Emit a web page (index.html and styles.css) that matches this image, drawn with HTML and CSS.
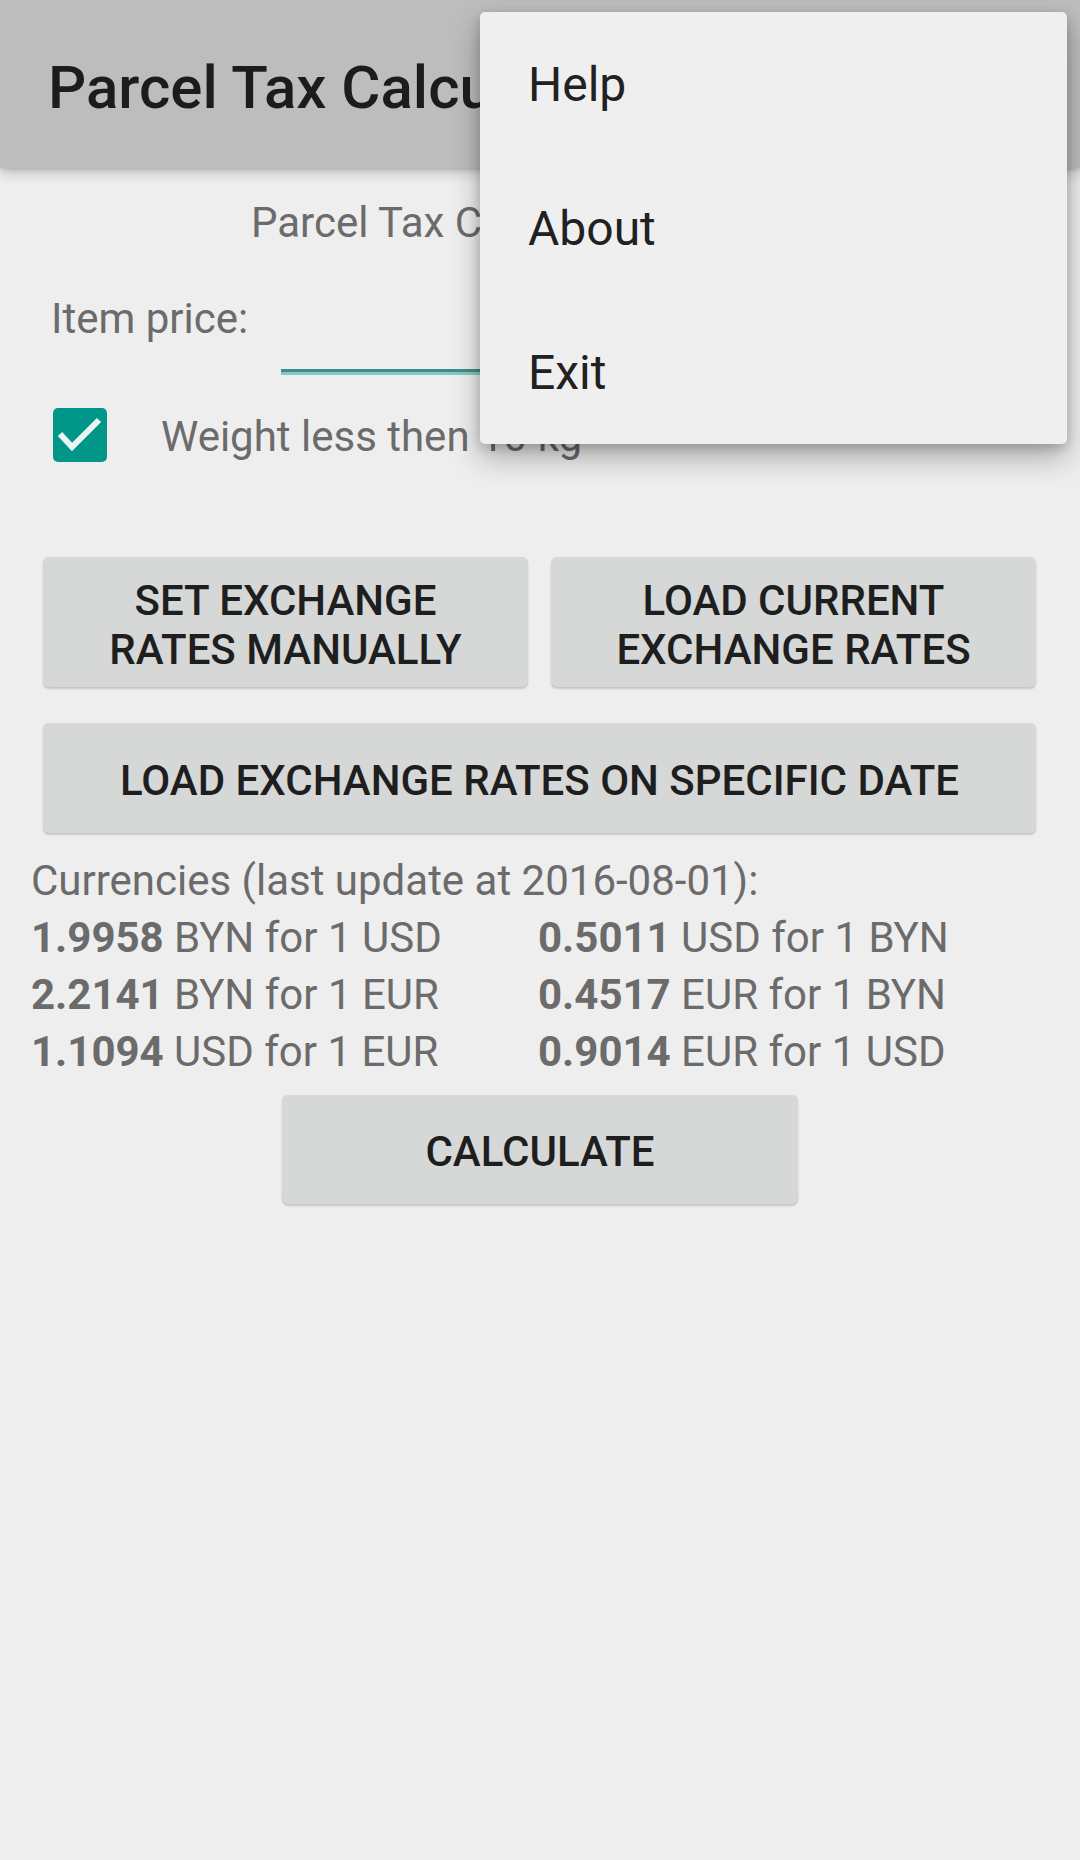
FILE: index.html
```html
<!DOCTYPE html>
<html lang="en">
<head>
<meta charset="utf-8">
<title>Parcel Tax Calculator</title>
<link rel="stylesheet" href="styles.css">
</head>
<body>
<div class="screen">
  <header class="toolbar">
    <h1 class="toolbar-title">Parcel Tax Calculator</h1>
    <svg class="overflow-icon" width="12" height="48" viewBox="0 0 12 48" aria-hidden="true">
      <circle cx="6" cy="6" r="6" fill="#212121"/>
      <circle cx="6" cy="24" r="6" fill="#212121"/>
      <circle cx="6" cy="42" r="6" fill="#212121"/>
    </svg>
  </header>

  <main class="content">
    <p class="subtitle">Parcel Tax Calculator</p>

    <div class="price-row">
      <label class="price-label">Item price:</label>
      <div class="price-field"></div>
    </div>

    <div class="check-row">
      <svg class="checkbox" width="54" height="54" viewBox="0 0 54 54" aria-hidden="true">
        <rect x="0" y="0" width="54" height="54" rx="5" fill="#009688"/>
        <polyline points="7,26 19,39 46,12" fill="none" stroke="#eaf6f4" stroke-width="6"/>
      </svg>
      <span class="check-label">Weight less then 10 kg</span>
    </div>

    <div class="button-grid">
      <div class="btn btn-two">SET EXCHANGE<br>RATES MANUALLY</div>
      <div class="btn btn-two">LOAD CURRENT<br>EXCHANGE RATES</div>
      <div class="btn btn-wide">LOAD EXCHANGE RATES ON SPECIFIC DATE</div>
    </div>

    <div class="rates">
      <div class="rates-title">Currencies (last update at 2016-08-01):</div>
      <div class="rate"><b>1.9958</b> BYN for 1 USD</div>
      <div class="rate"><b>0.5011</b> USD for 1 BYN</div>
      <div class="rate"><b>2.2141</b> BYN for 1 EUR</div>
      <div class="rate"><b>0.4517</b> EUR for 1 BYN</div>
      <div class="rate"><b>1.1094</b> USD for 1 EUR</div>
      <div class="rate"><b>0.9014</b> EUR for 1 USD</div>
    </div>

    <div class="calc-wrap">
      <div class="btn btn-calc">CALCULATE</div>
    </div>
  </main>

  <ul class="popup-menu">
    <li class="menu-item">Help</li>
    <li class="menu-item">About</li>
    <li class="menu-item">Exit</li>
  </ul>
</div>
</body>
</html>
```

FILE: styles.css
```css
* {
  box-sizing: border-box;
}

html, body {
  margin: 0;
  padding: 0;
  background: #eeeeee;
}

body {
  font-family: Roboto, "Noto Sans", "Liberation Sans", sans-serif;
  width: 1080px;
  height: 1860px;
  overflow: hidden;
}

.screen {
  position: relative;
  width: 1080px;
  height: 1860px;
  background: #eeeeee;
}

/* ---------- toolbar ---------- */
.toolbar {
  position: relative;
  z-index: 1;
  height: 168px;
  background: #bdbdbd;
  box-shadow: 0 5px 12px rgba(0, 0, 0, 0.2), 0 2px 3px rgba(0, 0, 0, 0.1);
  display: flex;
  align-items: flex-start;
  justify-content: space-between;
  padding: 52px 36px 0 48px;
}

.toolbar-title {
  margin: 0;
  font-size: 60px;
  font-weight: 500;
  line-height: normal;
  color: #1c1c1c;
  white-space: nowrap;
}

.overflow-icon {
  margin-top: 8px;
}

/* ---------- content ---------- */
.content {
  font-size: 42px;
  color: #6b6b6b;
}

.subtitle {
  margin: 30px 0 0;
  padding-left: 251px;
  line-height: normal;
  white-space: nowrap;
}

.price-row {
  display: flex;
  align-items: flex-start;
  margin-top: 47px;
  padding: 0 44px 0 51px;
}

.price-label {
  width: 230px;
  flex: none;
  line-height: normal;
}

.price-field {
  flex: 1;
  height: 78px;
  border-bottom: 3px solid #408d87;
  box-shadow: 0 3px 0 #86c8c1;
}

.check-row {
  display: flex;
  align-items: center;
  margin-top: 36px;
  padding-left: 53px;
}

.checkbox {
  flex: none;
  display: block;
}

.check-label {
  margin-left: 54px;
  padding-top: 3px;
  line-height: normal;
  white-space: nowrap;
}

/* ---------- buttons ---------- */
.button-grid {
  display: grid;
  grid-template-columns: 1fr 1fr;
  column-gap: 23px;
  row-gap: 36px;
  margin-top: 95px;
  padding: 0 44px 0 43px;
}

.btn {
  display: flex;
  align-items: center;
  justify-content: center;
  text-align: center;
  background: #d6d7d7;
  border-radius: 6px;
  box-shadow: 0 2px 2px rgba(0, 0, 0, 0.16), 0 0 1px rgba(0, 0, 0, 0.08);
  color: #1e1e1e;
  font-size: 42px;
  font-weight: 500;
  line-height: 49px;
}

.btn-two {
  height: 130px;
  padding-top: 5px;
}

.btn-wide {
  grid-column: 1 / span 2;
  height: 110px;
  padding-top: 4px;
}

/* ---------- rates ---------- */
.rates {
  display: grid;
  grid-template-columns: 507px 1fr;
  margin-top: 19px;
  padding-left: 31px;
  line-height: 57px;
  white-space: nowrap;
}

.rates-title {
  grid-column: 1 / span 2;
}

.rate b {
  font-weight: 700;
}

/* ---------- calculate ---------- */
.calc-wrap {
  display: flex;
  justify-content: center;
  margin-top: 15px;
}

.btn-calc {
  width: 516px;
  height: 109px;
  padding-top: 4px;
}

/* ---------- popup menu ---------- */
.popup-menu {
  position: absolute;
  z-index: 5;
  top: 12px;
  left: 480px;
  width: 587px;
  margin: 0;
  padding: 0;
  list-style: none;
  background: #efefef;
  border-radius: 5px;
  box-shadow: 0 14px 30px rgba(0, 0, 0, 0.28), 0 4px 12px rgba(0, 0, 0, 0.18);
}

.menu-item {
  height: 144px;
  padding: 2px 0 0 48px;
  font-size: 48px;
  line-height: 142px;
  color: #212121;
}
```
